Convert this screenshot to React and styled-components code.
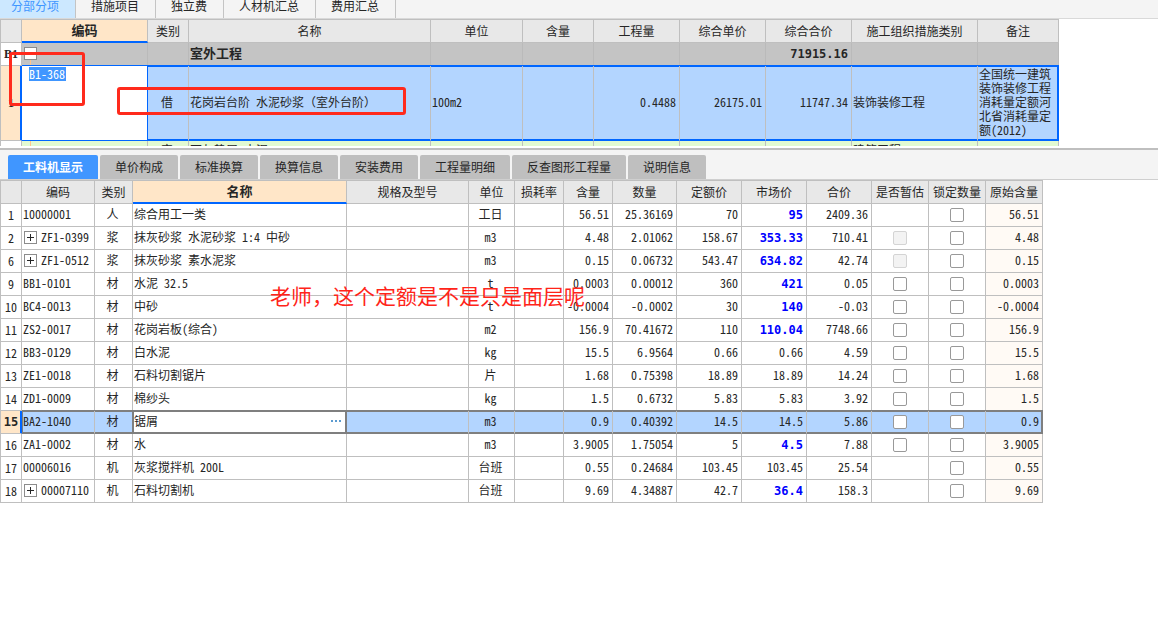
import { Fragment } from "react";
import styled, { createGlobalStyle, css } from "styled-components";

const GlobalStyle = createGlobalStyle`
    * {
        box-sizing: border-box;
    }
    body {
        margin: 0;
        background: #ffffff;
        color: #262626;
        font-family: "Noto Sans Mono CJK SC", "Noto Sans CJK SC", monospace;
        font-size: 12px;
        line-height: 14px;
    }
    button,
    input {
        font: inherit;
        color: inherit;
        margin: 0;
        padding: 0;
    }
`;

const Page = styled.main`
    position: relative;
    min-height: 100vh;
    overflow: hidden;
`;

const TopTabs = styled.nav`
    display: flex;
    height: 19px;
    background: #f4f4f4;
    border-bottom: 1px solid #d9d9d9;
    font-family: "Noto Sans CJK SC", sans-serif;
`;

const TopTab = styled.button`
    display: flex;
    padding: 0 16px 0 15px;
    border: 0;
    border-right: 1px solid #c4c4c4;
    background: ${props => (props.$active ? "#cce8ff" : "transparent")};
    color: ${props => (props.$active ? "#4096ff" : "#262626")};
    line-height: 12px;
    &:first-child {
        padding-left: 11px;
    }
`;

const UpperPane = styled.section`
    height: 127px;
    overflow: hidden;
`;

const Splitter = styled.div`
    height: 4px;
    border-top: 2px solid #ffffff;
    border-bottom: 2px solid #bfbfbf;
`;

const DetailTabs = styled.nav`
    display: flex;
    gap: 2px;
    height: 30px;
    padding: 5px 8px 0;
    background: #f4f4f4;
    border-bottom: 1px solid #cfcfcf;
    font-family: "Noto Sans CJK SC", sans-serif;
`;

const DetailTab = styled.button`
    height: 24px;
    padding: 0 15px;
    border: 0;
    border-radius: 2px 2px 0 0;
    background: ${props => (props.$active ? "#4096ff" : "#bfbfbf")};
    color: ${props => (props.$active ? "#ffffff" : "#262626")};
    font-weight: ${props => (props.$active ? 700 : 400)};
`;

const Grid = styled.table`
    width: ${props => props.$width}px;
    table-layout: fixed;
    border-collapse: separate;
    border-spacing: 0;
    border-left: 1px solid #bfbfbf;
    border-top: 1px solid #bfbfbf;
`;

const Col = styled.col`
    width: ${props => props.$width}px;
`;

const HeadCell = styled.th`
    height: 23px;
    padding: 0;
    border-right: 1px solid #bfbfbf;
    border-bottom: 1px solid #bfbfbf;
    background: #e8e8e8;
    font-weight: 400;
    white-space: nowrap;
    ${props => props.$current && css`
        padding-bottom: 1px;
        background: #ffe6c8;
        border-bottom: 2px solid #0066ff;
        font-size: 13px;
        font-weight: 700;
    `}
`;

const Cell = styled.td`
    height: 23px;
    padding: 0 3px 2px 1px;
    border-right: 1px solid #bfbfbf;
    border-bottom: 1px solid #bfbfbf;
    background-color: ${props => props.$bg || "#ffffff"};
    text-align: ${props => props.$align || "left"};
    white-space: nowrap;
`;

const CheckCell = styled(Cell)`
    padding: 0;
`;

/* cell with the vertical branch of the code tree */
const TreeCell = styled(Cell)`
    background-image: linear-gradient(#ffc68c, #ffc68c);
    background-position: 8px 100%;
    background-size: 1px ${props => props.$branch};
    background-repeat: no-repeat;
`;

const IndexCell = styled(Cell).attrs({ as: "th", scope: "row" })`
    padding: 0;
    text-align: center;
    font-weight: ${props => (props.$bold ? 700 : 400)};
    ${props => props.$bold && css`
        font-family: "DejaVu Sans Mono", monospace;
    `}
    ${props => props.$serif && css`
        font-family: "Liberation Serif", serif;
    `}
    ${props => props.$current && css`
        background-color: #ffe6c8;
        border-right: 1px solid #0066ff;
        box-shadow: inset -1px 0 0 #0066ff;
    `}
`;

const GroupRow = styled.tr`
    td {
        background-color: #c4c4c4;
        border-right-color: #bababa;
        font-size: 13px;
        font-weight: 700;
    }
`;

const ChosenRow = styled.tr`
    td {
        height: 75px;
        background-color: #b3d5ff;
        border-bottom-color: #0066ff;
        box-shadow: 0 -1px 0 #0066ff, inset 0 1px 0 #0066ff, inset 0 -1px 0 #0066ff;
    }
    td:last-child {
        border-right-color: #0066ff;
        box-shadow: 0 -1px 0 #0066ff, inset -1px 1px 0 #0066ff, inset 0 -1px 0 #0066ff;
    }
    td.editing {
        padding: 1px 7px;
        background-color: #ffffff;
        border-right-color: #0066ff;
        box-shadow: 0 -1px 0 #0066ff;
        vertical-align: top;
    }
`;

const WrapText = styled.div`
    white-space: normal;
    word-break: break-all;
`;

const CodeInput = styled.input`
    display: block;
    width: 37px;
    height: 14px;
    border: 0;
    outline: 0;
    background: #4096ff;
    color: #ffffff;
`;

const NextRow = styled.tr`
    td {
        padding-top: 2px;
        background-color: #e2fad2;
        vertical-align: top;
    }
`;

const DetailRow = styled.tr`
    ${props => props.$selected && css`
        td {
            background-color: #b3d5ff;
            border-bottom-color: #7f7f7f;
            box-shadow: 0 -1px 0 #7f7f7f, inset 0 1px 0 #7f7f7f, inset 0 -1px 0 #7f7f7f;
        }
        td:nth-child(2) {
            box-shadow: 0 -1px 0 #7f7f7f, inset 1px 1px 0 #7f7f7f, inset 0 -1px 0 #7f7f7f;
        }
        td:nth-child(3),
        td:last-child {
            border-right-color: #7f7f7f;
        }
        td:nth-child(4) {
            background-color: #ffffff;
            border-right-color: #7f7f7f;
            box-shadow: 0 -1px 0 #7f7f7f, inset 1px 1px 0 #7f7f7f, inset -1px -1px 0 #7f7f7f;
        }
        td:last-child {
            box-shadow: 0 -1px 0 #7f7f7f, inset 0 1px 0 #7f7f7f, inset -1px -1px 0 #7f7f7f;
        }
    `}
`;

const CellLine = styled.div`
    display: flex;
    align-items: center;
    gap: 4px;
`;

const Expander = styled.button`
    display: grid;
    place-items: center;
    width: 13px;
    height: 13px;
    margin-left: 1px;
    border: 1px solid #8c8c8c;
    background: #ffffff;
`;

const MoreButton = styled.button`
    display: flex;
    gap: 2px;
    margin-left: auto;
    padding-right: 2px;
    border: 0;
    background: transparent;
    i {
        width: 2px;
        height: 2px;
        background: #5b9bd0;
    }
`;

const Price = styled.span`
    ${props => props.$changed && css`
        color: #0000ff;
        font-family: "DejaVu Sans Mono", monospace;
        font-weight: 700;
    `}
`;

const Total = styled.span`
    font-family: "DejaVu Sans Mono", monospace;
    font-size: 12px;
`;

const Check = styled.input.attrs({ type: "checkbox" })`
    appearance: none;
    display: block;
    width: 14px;
    height: 14px;
    margin: 0 auto;
    border: 1px solid #999999;
    border-radius: 2px;
    background: #ffffff;
    &:disabled {
        border-color: #d4d4d4;
        background: #f3f3f3;
    }
`;

/* review marks laid over the sheet */
const Mark = styled.div`
    position: absolute;
    left: ${props => props.$x}px;
    top: ${props => props.$y}px;
    width: ${props => props.$w}px;
    height: ${props => props.$h}px;
    border: 3px solid #ff2a1c;
    border-radius: 3px;
    pointer-events: none;
`;

const Note = styled.p`
    position: absolute;
    left: 270px;
    top: 283px;
    margin: 0;
    color: #ff2419;
    font-family: "Noto Sans CJK SC", sans-serif;
    font-size: 21px;
    line-height: 24px;
    white-space: nowrap;
    pointer-events: none;
`;

const topTabs = ["分部分项", "措施项目", "独立费", "人材机汇总", "费用汇总"];

const detailTabs = [
    "工料机显示", "单价构成", "标准换算", "换算信息",
    "安装费用", "工程量明细", "反查图形工程量", "说明信息",
];

const upperCols = [
    ["", 21], ["编码", 126], ["类别", 41], ["名称", 242], ["单位", 92], ["含量", 71],
    ["工程量", 86], ["综合单价", 86], ["综合合价", 86], ["施工组织措施类别", 126], ["备注", 81],
];

const detailCols = [
    ["", 21], ["编码", 73], ["类别", 38], ["名称", 214], ["规格及型号", 122], ["单位", 46],
    ["损耗率", 49], ["含量", 49], ["数量", 64], ["定额价", 65], ["市场价", 65], ["合价", 65],
    ["是否暂估", 57], ["锁定数量", 57], ["原始含量", 57],
];

// est: "" no box, "off" disabled box, "on" normal box
const rows = [
    { no: 1, code: "10000001", type: "人", name: "综合用工一类", unit: "工日", use: "56.51", qty: "25.36169", base: "70", market: "95", changed: true, sum: "2409.36", est: "" },
    { no: 2, open: true, code: "ZF1-0399", type: "浆", name: "抹灰砂浆 水泥砂浆 1:4 中砂", unit: "m3", use: "4.48", qty: "2.01062", base: "158.67", market: "353.33", changed: true, sum: "710.41", est: "off" },
    { no: 6, open: true, code: "ZF1-0512", type: "浆", name: "抹灰砂浆 素水泥浆", unit: "m3", use: "0.15", qty: "0.06732", base: "543.47", market: "634.82", changed: true, sum: "42.74", est: "off" },
    { no: 9, code: "BB1-0101", type: "材", name: "水泥 32.5", unit: "t", use: "0.0003", qty: "0.00012", base: "360", market: "421", changed: true, sum: "0.05", est: "on" },
    { no: 10, code: "BC4-0013", type: "材", name: "中砂", unit: "t", use: "-0.0004", qty: "-0.0002", base: "30", market: "140", changed: true, sum: "-0.03", est: "on" },
    { no: 11, code: "ZS2-0017", type: "材", name: "花岗岩板(综合)", unit: "m2", use: "156.9", qty: "70.41672", base: "110", market: "110.04", changed: true, sum: "7748.66", est: "on" },
    { no: 12, code: "BB3-0129", type: "材", name: "白水泥", unit: "kg", use: "15.5", qty: "6.9564", base: "0.66", market: "0.66", sum: "4.59", est: "on" },
    { no: 13, code: "ZE1-0018", type: "材", name: "石料切割锯片", unit: "片", use: "1.68", qty: "0.75398", base: "18.89", market: "18.89", sum: "14.24", est: "on" },
    { no: 14, code: "ZD1-0009", type: "材", name: "棉纱头", unit: "kg", use: "1.5", qty: "0.6732", base: "5.83", market: "5.83", sum: "3.92", est: "on" },
    { no: 15, code: "BA2-1040", type: "材", name: "锯屑", unit: "m3", use: "0.9", qty: "0.40392", base: "14.5", market: "14.5", sum: "5.86", est: "on", selected: true },
    { no: 16, code: "ZA1-0002", type: "材", name: "水", unit: "m3", use: "3.9005", qty: "1.75054", base: "5", market: "4.5", changed: true, sum: "7.88", est: "on" },
    { no: 17, code: "00006016", type: "机", name: "灰浆搅拌机 200L", unit: "台班", use: "0.55", qty: "0.24684", base: "103.45", market: "103.45", sum: "25.54", est: "" },
    { no: 18, open: true, code: "00007110", type: "机", name: "石料切割机", unit: "台班", use: "9.69", qty: "4.34887", base: "42.7", market: "36.4", changed: true, sum: "158.3", est: "" },
];

const GridHead = ({ cols, current }) => (
    <Fragment>
        <colgroup>
            {cols.map(([label, width]) => <Col key={label} $width={width} />)}
        </colgroup>
        <thead>
            <tr>
                {cols.map(([label]) => (
                    <HeadCell key={label} scope="col" $current={label === current}>{label}</HeadCell>
                ))}
            </tr>
        </thead>
    </Fragment>
);

const PlusIcon = () => (
    <svg width="9" height="9" viewBox="0 0 9 9" shapeRendering="crispEdges">
        <path d="M1 4.5h7M4.5 1v7" stroke="#262626" fill="none" />
    </svg>
);

const UpperGrid = () => (
    <Grid $width={1059}>
        <GridHead cols={upperCols} current="编码" />
        <tbody>
            <GroupRow>
                <IndexCell $bold $serif>B1</IndexCell>
                <TreeCell $branch="8px"><Expander aria-label="收起 B1" /></TreeCell>
                <Cell />
                <Cell>室外工程</Cell>
                <Cell />
                <Cell />
                <Cell />
                <Cell />
                <Cell $align="right"><Total>71915.16</Total></Cell>
                <Cell />
                <Cell />
            </GroupRow>
            <ChosenRow>
                <IndexCell $current $bold $serif>1</IndexCell>
                <Cell className="editing"><CodeInput aria-label="编码" defaultValue="B1-368" /></Cell>
                <Cell $align="center">借</Cell>
                <Cell>花岗岩台阶 水泥砂浆（室外台阶）</Cell>
                <Cell>100m2</Cell>
                <Cell />
                <Cell $align="right">0.4488</Cell>
                <Cell $align="right">26175.01</Cell>
                <Cell $align="right">11747.34</Cell>
                <Cell>装饰装修工程</Cell>
                <Cell><WrapText>全国统一建筑装饰装修工程消耗量定额河北省消耗量定额(2012)</WrapText></Cell>
            </ChosenRow>
            <NextRow>
                <IndexCell />
                <TreeCell $branch="100%" />
                <Cell $align="center">定</Cell>
                <Cell>石灰垫层 水泥</Cell>
                <Cell />
                <Cell />
                <Cell />
                <Cell />
                <Cell />
                <Cell>建筑工程</Cell>
                <Cell />
            </NextRow>
        </tbody>
    </Grid>
);

const DetailGrid = () => (
    <Grid $width={1043}>
        <GridHead cols={detailCols} current="名称" />
        <tbody>
            {rows.map(row => (
                <DetailRow key={row.no} $selected={row.selected}>
                    <IndexCell $current={row.selected} $bold={row.selected}>{row.no}</IndexCell>
                    <Cell>
                        <CellLine>
                            {row.open && <Expander aria-label={`展开 ${row.code}`}><PlusIcon /></Expander>}
                            {row.code}
                        </CellLine>
                    </Cell>
                    <Cell $align="center">{row.type}</Cell>
                    <Cell>
                        <CellLine>
                            {row.name}
                            {row.selected && <MoreButton aria-label="更多"><i /><i /><i /></MoreButton>}
                        </CellLine>
                    </Cell>
                    <Cell />
                    <Cell $align="center">{row.unit}</Cell>
                    <Cell />
                    <Cell $align="right">{row.use}</Cell>
                    <Cell $align="right">{row.qty}</Cell>
                    <Cell $align="right">{row.base}</Cell>
                    <Cell $align="right"><Price $changed={row.changed}>{row.market}</Price></Cell>
                    <Cell $align="right">{row.sum}</Cell>
                    <CheckCell>
                        {row.est && <Check aria-label={`是否暂估 ${row.name}`} disabled={row.est === "off"} />}
                    </CheckCell>
                    <CheckCell><Check aria-label={`锁定数量 ${row.name}`} /></CheckCell>
                    <Cell $align="right" $bg="#fffaf5">{row.use}</Cell>
                </DetailRow>
            ))}
        </tbody>
    </Grid>
);

const App = () => (
    <Page>
        <GlobalStyle />
        <TopTabs>
            {topTabs.map((label, i) => <TopTab key={label} $active={i === 0}>{label}</TopTab>)}
        </TopTabs>
        <UpperPane>
            <UpperGrid />
        </UpperPane>
        <Splitter />
        <DetailTabs>
            {detailTabs.map((label, i) => <DetailTab key={label} $active={i === 0}>{label}</DetailTab>)}
        </DetailTabs>
        <DetailGrid />
        <Mark $x={9} $y={52} $w={76} $h={54} />
        <Mark $x={117} $y={87} $w={289} $h={28} />
        <Note>老师，这个定额是不是只是面层呢</Note>
    </Page>
);

export default App;
